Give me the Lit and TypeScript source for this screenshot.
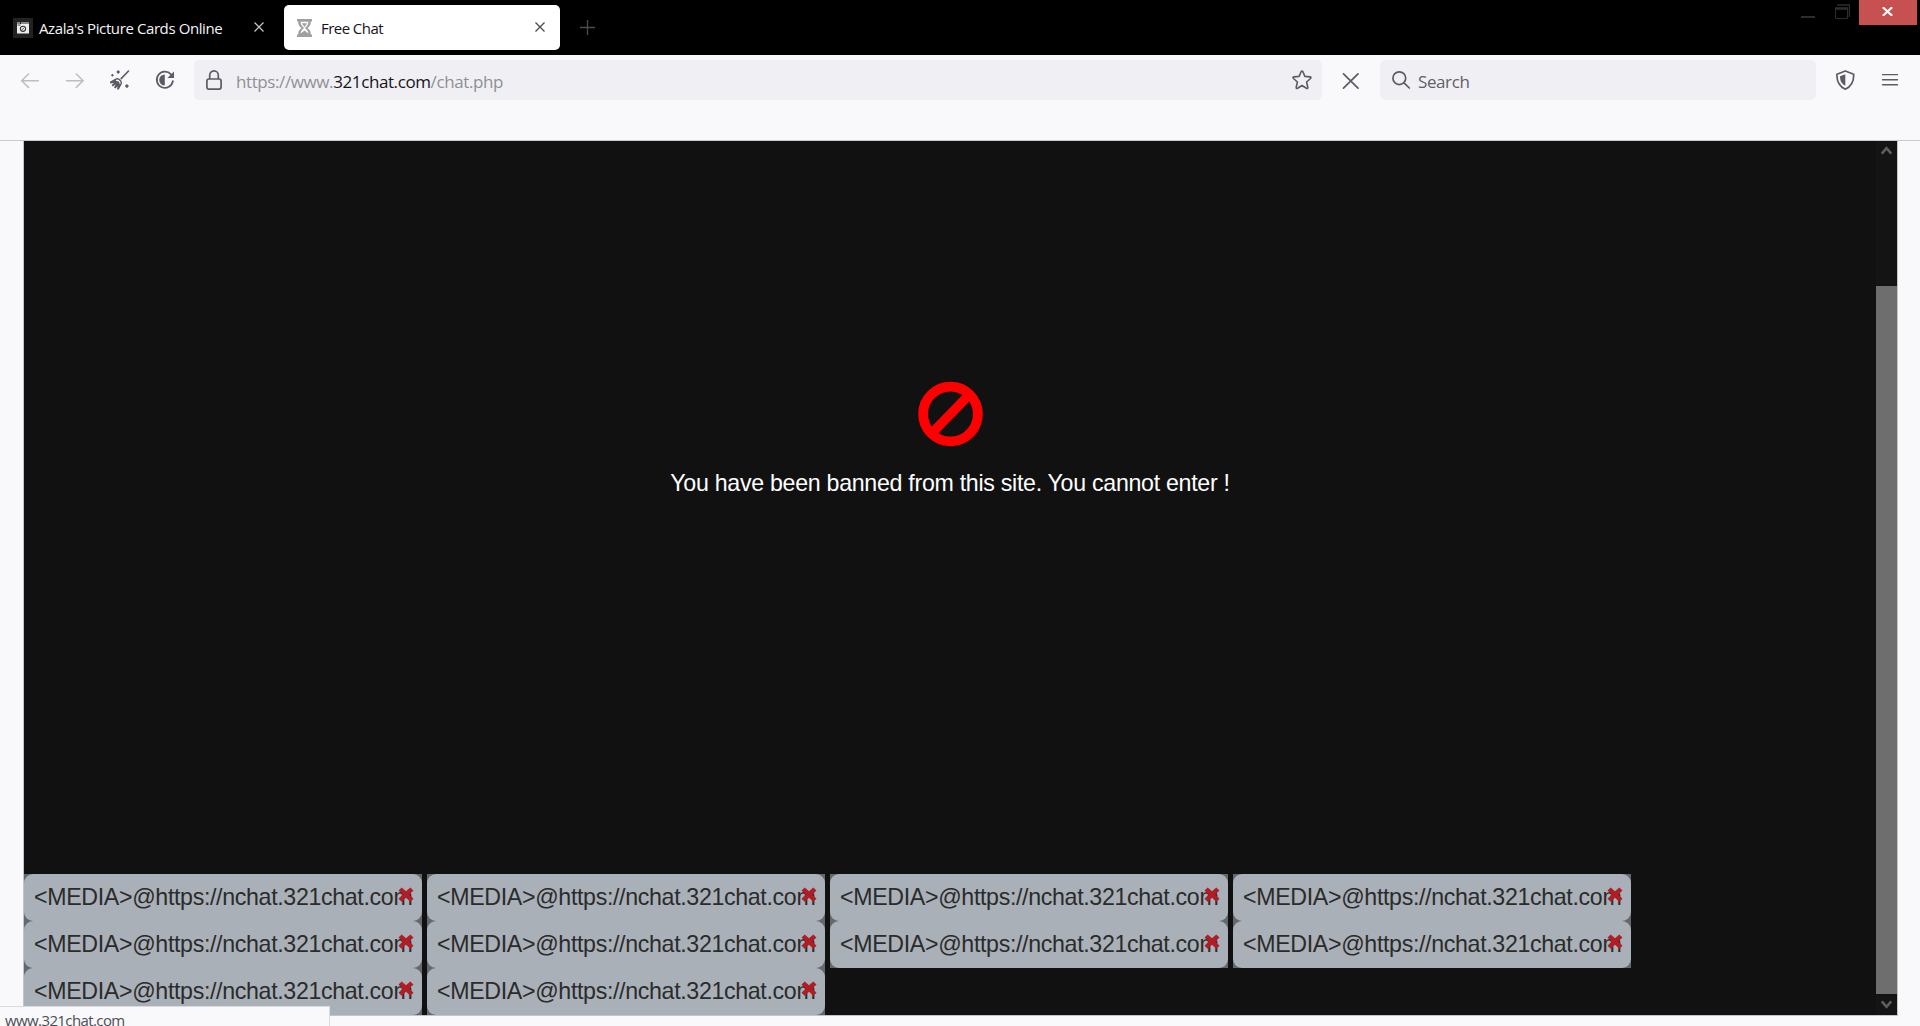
import { LitElement, html, css, svg } from "lit";
import { customElement } from "lit/decorators.js";

const cross = (s: number, w = 1.3) => html`<svg width=${s} height=${s} viewBox="0 0 10 10" fill="none" stroke="currentColor" stroke-width=${w}><path d="M.5 .5l9 9M9.5 .5l-9 9" /></svg>`;

const tool = (body: unknown) => html`<button class="tool"><svg width="21" height="20" viewBox="0 0 21 20" fill="none" stroke="currentColor" stroke-width="1.5" stroke-linecap="round" stroke-linejoin="round">${body}</svg></button>`;

const icons = {
  back: svg`<path d="M2.5 10.7H19.3M9.5 4L2.7 10.7L9.5 17.4" />`,
  forward: svg`<path d="M2.5 10.7H19.3M12.3 4L19.1 10.7L12.3 17.4" />`,
  broom: svg`<path d="M19.5 1L12.2 8.6" stroke-width="1.6"/><path d="M6.6 8.6C8.8 6.4 14.2 11 12.9 13.8L9.8 19.4L8 19.6L8.6 16.2L6.4 18.6L5 17.6L6.8 14.6L3.6 16.4L2.6 15.1L5 12.9L1.2 13.6L.9 11.8Z" fill="currentColor" stroke="none"/><path d="M7.6 10.4C9 9.8 11.2 11.8 11 13.2" stroke="#f9f9fb" stroke-width="1.3"/><path d="M9.2 .1l1.9 1.9l-1.9 1.9l-1.9-1.9zM3.4 3.7l1.5 1.5l-1.5 1.5l-1.5-1.5zM17.9 14l2.1 2.1l-2.1 2.1l-2.1-2.1z" fill="currentColor" stroke="none"/>`,
  reload: svg`<path d="M17 4.4A8.1 8.1 0 1 0 18.9 11" stroke-width="1.7"/><path d="M20 1.4V8H13.4Z" fill="currentColor" stroke="none"/><path d="M10.8 4.4V15.6A5.6 5.6 0 0 1 10.8 4.4Z" fill="currentColor" stroke="none"/>`,
  stop: svg`<path d="M3.5 3.8L18 18.2M18 3.8L3.5 18.2" stroke-width="1.7"/>`,
  shield: svg`<path d="M10.3 1L18.7 4.3C18.9 11.5 16.5 16.6 10.3 19.2C4.1 16.6 1.7 11.5 1.9 4.3Z" stroke-width="1.7"/><path d="M10.3 4.2V15.8C6.4 13.8 5 10.6 5 6.2Z" fill="currentColor" stroke="none"/>`,
  menu: svg`<path d="M2.5 4.6H17.5M2.5 9.7H17.5M2.5 14.7H17.5" stroke-width="1.4"/>`,
};

@customElement("media-chip")
export class MediaChip extends LitElement {
  static styles = css`
    :host { display: block; height: 47px; background: #65696c; }
    .chip { box-sizing: border-box; height: 47px; padding-left: 10px; border-radius: 9px; background: #a9b0b8; color: #2b2b2b; font: 23.2px/47px "Liberation Sans", Arial, sans-serif; letter-spacing: -0.34px; white-space: nowrap; position: relative; }
    .remove { position: absolute; left: 374px; top: 13px; display: block; }
  `;
  render() {
    return html`<div class="chip">&lt;MEDIA&gt;@https://nchat.321chat.com<svg class="remove" width="16" height="15" viewBox="0 0 16 15"><path d="M3.7 .4L8 4.3L12.3 .4L15.5 3.4L11.3 7.5L15.5 11.7L12.3 14.7L8 10.8L3.7 14.7L.5 11.7L4.7 7.5L.5 3.4Z" fill="#b01d24"/></svg></div>`;
  }
}

@customElement("app-root")
export class AppRoot extends LitElement {
  static styles = css`
    :host { display: flex; flex-direction: column; width: 1920px; height: 1026px; overflow: hidden; position: relative; background: #f9f9fb; font-family: "Open Sans", "Noto Sans", sans-serif; }
    * { box-sizing: border-box; }
    svg { display: block; flex: none; }
    button { border: 0; padding: 0; background: none; color: inherit; }
    .tabs { height: 55px; flex: none; background: #000; display: flex; align-items: flex-start; }
    .tab { height: 45px; margin-top: 5px; display: flex; align-items: center; font-size: 15px; line-height: 20px; white-space: nowrap; }
    .tab.idle { width: 276px; margin-left: 4px; padding: 0 16px 0 9px; color: #f4f4f6; }
    .tab.active { width: 276px; margin-left: 4px; padding: 0 15px 0 13px; border-radius: 5px; background: #fff; color: #15141a; }
    .label { padding-top: 1px; flex: 1; }
    .idle .label { margin-left: 6px; letter-spacing: -0.4px; }
    .active .label { margin-left: 9px; letter-spacing: -0.55px; }
    .close { color: #4a4a50; padding-bottom: 1px; }
    .idle .close { color: #c8c8c8; }
    .plus { margin: 20px 0 0 20px; }
    .window { margin-left: auto; display: flex; align-items: flex-start; }
    .min { margin: 16px 20px 0 0; width: 14px; height: 2px; background: #2d2d2d; }
    .restore { margin: 4px 9px 0 0; }
    .shut { width: 58px; height: 25px; margin-right: 3px; background: #c75050; color: #fff; display: flex; justify-content: center; padding: 7px 2px 0 0; }
    .bar { height: 85px; flex: none; padding: 5px 0 0 7px; display: flex; align-items: flex-start; color: #5b5b66; }
    .tool { width: 45px; height: 40px; display: flex; align-items: center; justify-content: center; flex: none; padding-bottom: 1px; }
    .off { color: #bdbdc2; display: flex; }
    .field { height: 40px; border-radius: 5px; background: #f0f0f4; display: flex; align-items: center; font-size: 17px; line-height: 24px; white-space: nowrap; }
    .url { width: 1128px; margin-left: 7px; padding: 0 10px 0 12px; color: #8f8f96; }
    .address { flex: 1; padding: 3px 0 0 14px; letter-spacing: -0.4px; }
    .address b { font-weight: 400; color: #15141a; }
    .search { width: 436px; margin-left: 7px; padding-left: 12px; color: #5f5f68; }
    .hint { padding: 3px 0 0 7px; letter-spacing: -0.4px; }
    .right { display: flex; margin-left: 7px; }
    .stop { margin-left: 6px; }
    .rule { height: 1px; flex: none; background: #c9c9cb; }
    .page { width: 1875px; height: 875px; margin-left: 23px; flex: none; border: solid #c4c4c6; border-width: 0 1px 1px; background: #111; display: flex; }
    .main { width: 1852px; display: flex; flex-direction: column; }
    .notice { height: 733px; padding-top: 240px; display: flex; flex-direction: column; align-items: center; color: #fff; font: 23.2px/30px "Liberation Sans", Arial, sans-serif; }
    .notice p { margin: 21px 0 0; letter-spacing: -0.29px; white-space: pre; }
    .chips { display: grid; grid-template-columns: repeat(4, 398px); column-gap: 5px; }
    .scroll { width: 21px; background: #141414; display: flex; flex-direction: column; align-items: center; }
    .arrow { height: 21px; display: flex; align-items: center; }
    .arrow.up { padding-bottom: 2px; }
    .track { flex: 1; width: 21px; padding-top: 124px; display: flex; }
    .thumb { flex: 1; background: #6e6e6e; }
    .status { position: absolute; left: 0; bottom: 0; width: 330px; height: 20px; padding: 3px 0 0 5px; overflow: hidden; border: solid #dcdcde; border-width: 1px 1px 0 0; background: #f9f9fb; color: #4d4d55; font-size: 15px; line-height: 20px; letter-spacing: -0.6px; }
  `;

  render() {
    return html`
      <div class="tabs">
        <div class="tab idle">
          <svg width="20" height="20" viewBox="0 0 20 20"><rect width="20" height="20" fill="#222"/><path d="M4 4.5h3v1H4zM8 4.5h8v1H8zM4 6h12v9.5H4z" fill="#eee"/><circle cx="10" cy="10.8" r="2.6" fill="none" stroke="#333" stroke-width="1.1"/><path d="M9.3 11.7l1.6-1.9M4.5 7h3" stroke="#333" stroke-width=".9"/></svg>
          <span class="label">Azala's Picture Cards Online</span>
          <button class="close">${cross(10, 1.2)}</button>
        </div>
        <div class="tab active">
          <svg width="15" height="18" viewBox="0 0 15 18"><path d="M0 0H15V2.4H13.8C13.8 6 12.7 7.5 10.4 9C12.7 10.5 13.8 12 13.8 15.6H15V18H0V15.6H1.2C1.2 12 2.3 10.5 4.6 9C2.3 7.5 1.2 6 1.2 2.4H0Z" fill="#a0a0a0"/><path d="M3.6 2.8H11.4C11.3 5.7 10 7.3 8.3 8.4V9.6C10 10.7 11.1 12 11.4 14.4L7.5 11.4L3.6 14.4C3.9 12 5 10.7 6.7 9.6V8.4C5 7.3 3.7 5.7 3.6 2.8Z" fill="#fff"/><path d="M4.8 4.2H10.2L7.5 8Z" fill="#a0a0a0"/></svg>
          <span class="label">Free Chat</span>
          <button class="close">${cross(10)}</button>
        </div>
        <svg class="plus" width="15" height="15" viewBox="0 0 15 15" stroke="#4b4b50" stroke-width="1.3"><path d="M7.5 0V15M0 7.5H15"/></svg>
        <div class="window">
          <span class="min"></span>
          <svg class="restore" width="15" height="15" viewBox="0 0 15 15" fill="none" stroke="#2d2d2d"><path d="M2 1H14.5V13" stroke-width="1.5"/><path d="M.5 4V14.5H12.5V4" /><path d="M0 4.5H13" stroke-width="2.6"/></svg>
          <button class="shut"><svg width="11" height="9" viewBox="0 0 11 9" stroke="#fff" stroke-width="2.2"><path d="M.8 .3L10.2 8.7M10.2 .3L.8 8.7"/></svg></button>
        </div>
      </div>
      <div class="bar">
        <div class="off">${tool(icons.back)}${tool(icons.forward)}</div>
        ${tool(icons.broom)}${tool(icons.reload)}
        <div class="field url">
          <svg width="16" height="20" viewBox="0 0 16 20" fill="none" stroke="#5b5b66" stroke-width="1.7"><rect x=".9" y="9" width="14.2" height="10.1" rx="2"/><path d="M3.7 9V5.2A4.3 4.3 0 0 1 12.3 5.2V9"/></svg>
          <span class="address">https://www.<b>321chat.com</b>/chat.php</span>
          <svg width="20" height="20" viewBox="0 0 20 20" fill="none" stroke="#5b5b66" stroke-width="1.6" stroke-linejoin="round"><path d="M9.1 1.7Q10 .3 10.9 1.7L12.9 6.4L18.1 6.9Q19.7 7.3 18.5 8.5L14.6 12L15.8 17.2Q16 19 14.4 18.2L10 15.5L5.6 18.2Q4 19 4.2 17.2L5.4 12L1.5 8.5Q.3 7.3 1.9 6.9L7.1 6.4Z"/></svg>
        </div>
        <div class="stop">${tool(icons.stop)}</div>
        <div class="field search">
          <svg width="19" height="20" viewBox="0 0 19 20" fill="none" stroke="#5b5b66" stroke-width="1.7" stroke-linecap="round"><circle cx="7.3" cy="8.2" r="6.4"/><path d="M12 12.8L17.3 18"/></svg>
          <span class="hint">Search</span>
        </div>
        <div class="right">${tool(icons.shield)}${tool(icons.menu)}</div>
      </div>
      <div class="rule"></div>
      <div class="page">
        <div class="main">
          <div class="notice">
            <svg width="65" height="66" viewBox="0 0 65 66" fill="none" stroke="#f00"><circle cx="32.5" cy="33" r="27.4" stroke-width="9.8"/><path d="M14.5 51.5L50.5 14.5" stroke-width="9.6"/></svg>
            <p>You have been banned from this site. You cannot enter !</p>
          </div>
          <div class="chips">${Array.from({ length: 10 }, () => html`<media-chip></media-chip>`)}</div>
        </div>
        <div class="scroll">
          <div class="arrow up"><svg width="11" height="9" viewBox="0 0 11 9" fill="none" stroke="#5e5e5e" stroke-width="2.6"><path d="M.8 7.6L5.5 2.2L10.2 7.6"/></svg></div>
          <div class="track"><div class="thumb"></div></div>
          <div class="arrow"><svg width="11" height="9" viewBox="0 0 11 9" fill="none" stroke="#5e5e5e" stroke-width="2.6"><path d="M.8 1.4L5.5 6.8L10.2 1.4"/></svg></div>
        </div>
      </div>
      <div class="status">www.321chat.com</div>
    `;
  }
}
